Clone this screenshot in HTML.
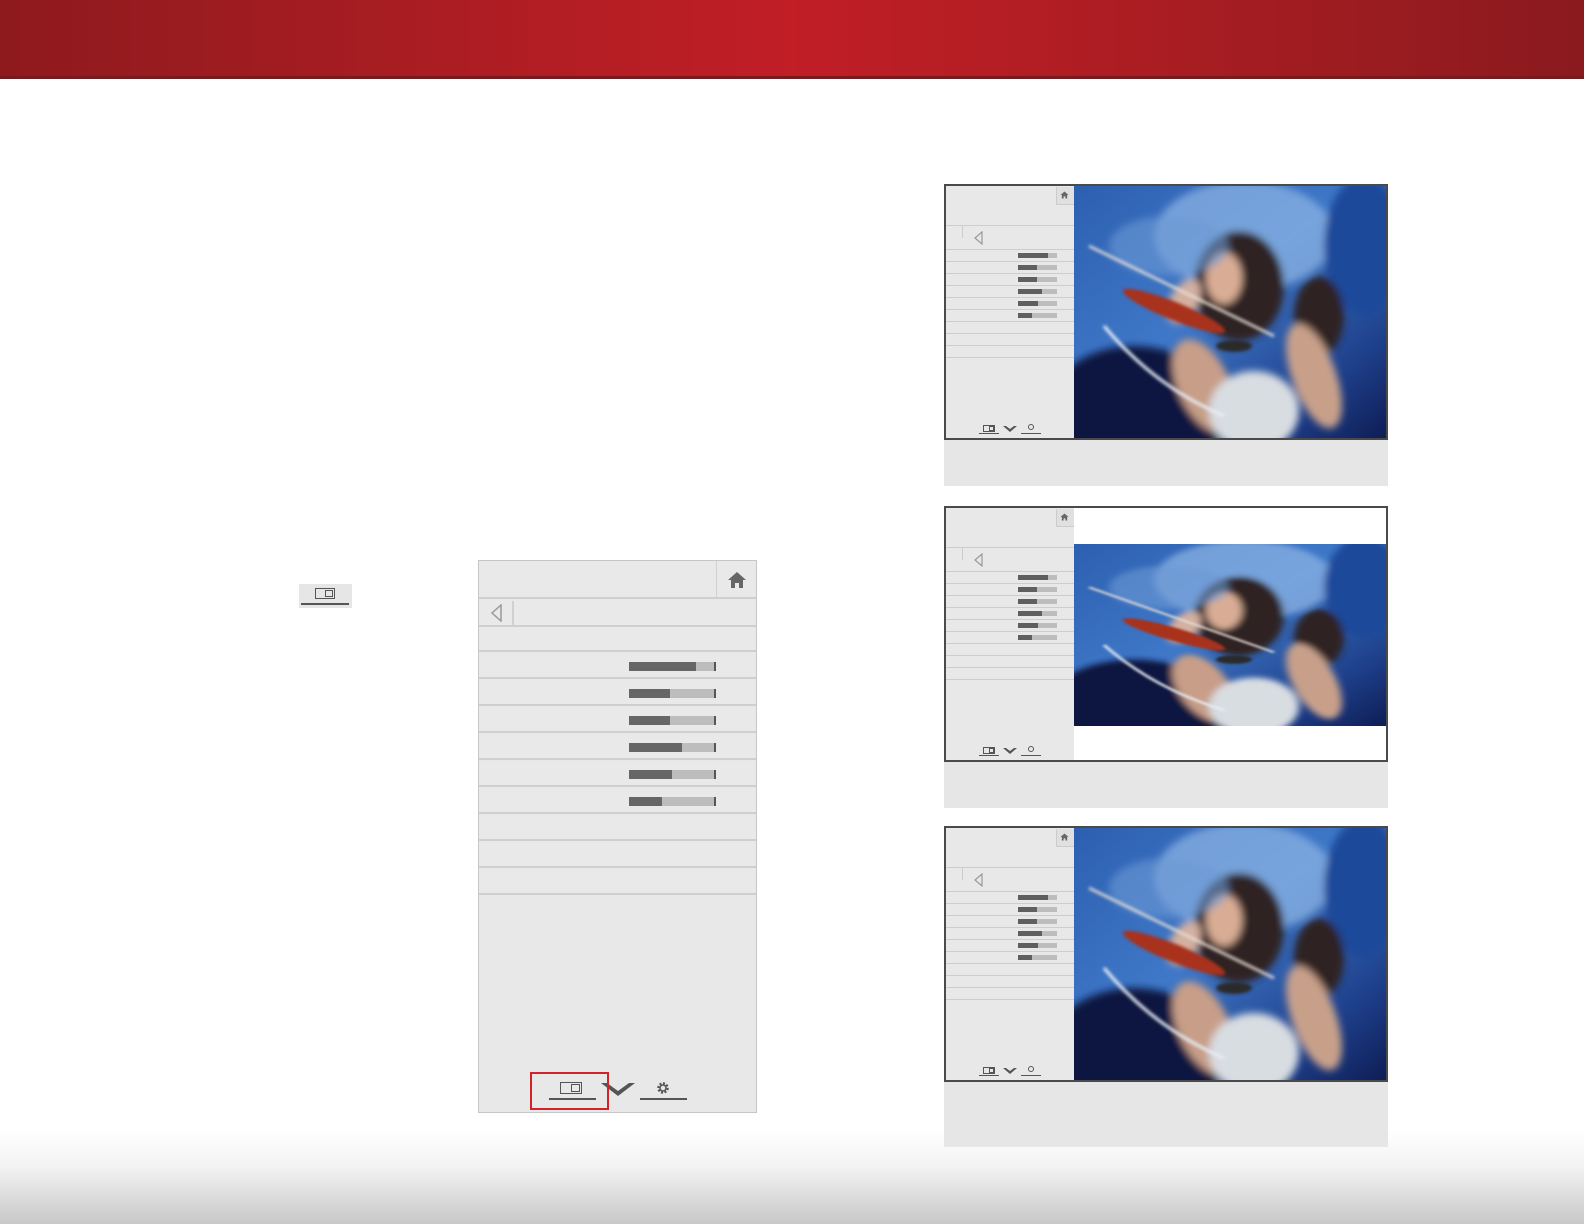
<!DOCTYPE html>
<html><head><meta charset="utf-8"><style>
*{margin:0;padding:0;box-sizing:border-box}
body{width:1584px;height:1224px;position:relative;overflow:hidden;background:#fff;font-family:"Liberation Sans",sans-serif}
.hdr{position:absolute;left:0;top:0;width:1584px;height:79px;background:linear-gradient(90deg,#8e1a1e 0%,#a81d22 25%,#c11e26 50%,#a81d22 75%,#8a1a1e 100%)}
.hdr:after{content:"";position:absolute;left:0;right:0;bottom:0;height:3px;background:linear-gradient(#7a1a1e,#6d1e22)}
.foot{position:absolute;left:0;top:1130px;width:1584px;height:94px;background:linear-gradient(#fff 0%,#f2f2f2 40%,#d6d6d6 80%,#c8c8c8 100%)}
.a{position:absolute}
.panel{left:478px;top:560px;width:279px;height:553px;background:#e8e8e8;border:1px solid #c6c6c6}
.row{position:absolute;left:0;width:277px;height:25px;border-bottom:2px solid #cfcfcf;background:#e9e9e9}
.bar{position:absolute;left:150px;top:8px;width:87px;height:9px;background:#bdbdbd;border-right:2px solid #555}
.bar i{display:block;height:9px;background:#666}
.thumb{position:absolute;left:944px;width:444px;height:256px;border:2px solid #4a4a4a;background:#fff;overflow:hidden}
.cap{position:absolute;left:944px;width:444px;background:#e6e6e6}
.mini{position:absolute;left:0;top:0;width:128px;height:252px;background:#e8e8e8}
.mrow{position:absolute;left:0;width:128px;height:12px;border-bottom:1px solid #cdcdcd}
.mbar{position:absolute;left:72px;top:3px;width:39px;height:5px;background:#bdbdbd}
.mbar i{display:block;height:5px;background:#5f5f5f}
.photo{position:absolute;overflow:hidden}
.photo svg{display:block;width:100%;height:100%}
</style></head><body>
<div class="hdr"></div>
<div class="foot"></div>

<svg width="0" height="0" style="position:absolute">
 <defs>
  <filter id="bl" x="-20%" y="-20%" width="140%" height="140%"><feGaussianBlur stdDeviation="4"/></filter>
  <filter id="bl2"><feGaussianBlur stdDeviation="1.5"/></filter>
  <linearGradient id="bg" x1="0" y1="0" x2="1" y2="1"><stop offset="0" stop-color="#2d5fb0"/><stop offset="0.45" stop-color="#3f78c8"/><stop offset="0.8" stop-color="#1e3f8a"/><stop offset="1" stop-color="#0e1d55"/></linearGradient>
  <g id="pic">
   <rect width="314" height="252" fill="url(#bg)"/>
   <g filter="url(#bl)">
    <ellipse cx="170" cy="50" rx="90" ry="55" fill="#8fb6e6" opacity="0.7"/>
    <ellipse cx="60" cy="230" rx="90" ry="70" fill="#0a1440"/>
    <ellipse cx="290" cy="60" rx="40" ry="70" fill="#1f4a9a"/>
    <ellipse cx="165" cy="100" rx="45" ry="55" fill="#2e2420"/>
    <ellipse cx="245" cy="130" rx="25" ry="40" fill="#2e2420"/>
    <ellipse cx="150" cy="92" rx="18" ry="26" fill="#d9ad95"/>
    <ellipse cx="130" cy="200" rx="26" ry="50" fill="#c89e88" transform="rotate(-25 130 200)"/>
    <ellipse cx="240" cy="190" rx="22" ry="55" fill="#c8a08a" transform="rotate(-20 240 190)"/>
    <ellipse cx="110" cy="115" rx="14" ry="24" fill="#d4b0a0" transform="rotate(30 110 115)"/>
    <ellipse cx="180" cy="225" rx="45" ry="40" fill="#d8dde2"/>
    <ellipse cx="95" cy="60" rx="60" ry="30" fill="#6d9ad6" opacity="0.6"/>
   </g>
   <g filter="url(#bl2)">
    <ellipse cx="100" cy="125" rx="55" ry="9" fill="#a8301c" transform="rotate(22 100 125)"/>
    <line x1="15" y1="60" x2="200" y2="150" stroke="#e8e0d8" stroke-width="2.5"/>
    <path d="M30 140 Q80 200 150 230" stroke="#e8eef5" stroke-width="3" fill="none"/>
    <ellipse cx="160" cy="160" rx="18" ry="6" fill="#2a2a2a"/>
   </g>
  </g>
 </defs>
</svg>

<!-- small icon -->
<div class="a" style="left:299px;top:584px;width:53px;height:24px;background:#e6e6e6"></div>
<div class="a" style="left:315px;top:588px;width:20px;height:11px;border:1px solid #555"></div>
<div class="a" style="left:325px;top:590px;width:8px;height:7px;border:1px solid #555"></div>
<div class="a" style="left:301px;top:603px;width:48px;height:2px;background:#555"></div>

<!-- main panel -->
<div class="a panel">
 <div class="row" style="top:0;height:38px;"></div>
 <div class="a" style="left:237px;top:0;width:1px;height:37px;background:#d0d0d0"></div>
 <svg class="a" style="left:248px;top:10px" width="20" height="18" viewBox="0 0 20 18"><path d="M10 1L1 9h3v8h4v-5h4v5h4V9h3z" fill="#666"/></svg>
 <div class="row" style="top:39px;height:27px"></div>
 <div class="a" style="left:33px;top:40px;width:2px;height:25px;background:#d0d0d0"></div>
 <svg class="a" style="left:11px;top:43px" width="14" height="18"><path d="M11 1L2 9l9 8z" fill="none" stroke="#999" stroke-width="1.5"/></svg>
 <div class="row" style="top:66px"></div>
 <div class="row" style="top:93px"><div class="bar"><i style="width:67px"></i></div></div>
 <div class="row" style="top:120px"><div class="bar"><i style="width:41px"></i></div></div>
 <div class="row" style="top:147px"><div class="bar"><i style="width:41px"></i></div></div>
 <div class="row" style="top:174px"><div class="bar"><i style="width:53px"></i></div></div>
 <div class="row" style="top:201px"><div class="bar"><i style="width:43px"></i></div></div>
 <div class="row" style="top:228px"><div class="bar"><i style="width:33px"></i></div></div>
 <div class="row" style="top:255px"></div>
 <div class="row" style="top:282px"></div>
 <div class="row" style="top:309px"></div>
 <div class="a" style="left:81px;top:521px;width:22px;height:12px;border:1px solid #555"></div>
 <div class="a" style="left:92px;top:523px;width:9px;height:8px;border:1px solid #555"></div>
 <div class="a" style="left:70px;top:537px;width:47px;height:2px;background:#555"></div>
 <svg class="a" style="left:121px;top:519px" width="36" height="20"><path d="M1 3l17 13L35 3l-6 0-11 8L7 3z" fill="#555"/></svg>
 <svg class="a" style="left:176px;top:519px" width="16" height="16" viewBox="0 0 16 16"><circle cx="8" cy="8" r="4.5" fill="none" stroke="#555" stroke-width="2.5" stroke-dasharray="2 1.5"/><circle cx="8" cy="8" r="3" fill="none" stroke="#555" stroke-width="1.5"/></svg>
 <div class="a" style="left:161px;top:537px;width:47px;height:2px;background:#555"></div>
 <div class="a" style="left:51px;top:511px;width:79px;height:38px;border:2px solid #d2232a"></div>
</div>

<!-- thumbnails -->
<div class="thumb" style="top:184px"><div class="photo" style="left:128px;top:0;width:314px;height:252px"><svg viewBox="0 0 314 252" preserveAspectRatio="none"><use href="#pic"/></svg></div><div class="mini"></div></div>
<div class="cap" style="top:440px;height:46px"></div>
<div class="thumb" style="top:506px"><div class="photo" style="left:128px;top:36px;width:314px;height:182px"><svg viewBox="0 0 314 252" preserveAspectRatio="none"><use href="#pic"/></svg></div><div class="mini"></div></div>
<div class="cap" style="top:762px;height:46px"></div>
<div class="thumb" style="top:826px"><div class="photo" style="left:128px;top:0;width:314px;height:252px"><svg viewBox="0 0 314 252" preserveAspectRatio="none"><use href="#pic"/></svg></div><div class="mini"></div></div>
<div class="cap" style="top:1082px;height:65px"></div>

<script>
document.querySelectorAll('.mini').forEach(function(m){
 var h='';
 h+='<div class="mrow" style="top:0;height:40px"></div>';
 h+='<div class="a" style="left:110px;top:1px;width:18px;height:18px;background:#e0e0e0;border-left:1px solid #ccc;border-bottom:1px solid #ccc"></div>';
 h+='<svg class="a" style="left:114px;top:5px" width="9" height="8" viewBox="0 0 20 18"><path d="M10 1L1 9h3v8h4v-5h4v5h4V9h3z" fill="#666"/></svg>';
 h+='<div class="mrow" style="top:40px;height:24px"></div>';
 h+='<div class="a" style="left:16px;top:40px;width:1px;height:12px;background:#ccc"></div>';
 h+='<svg class="a" style="left:28px;top:45px" width="10" height="14"><path d="M8 1L1 7l7 6z" fill="none" stroke="#999" stroke-width="1.2"/></svg>';
 var w=[30,19,19,24,20,14];
 for(var i=0;i<9;i++){h+='<div class="mrow" style="top:'+(64+i*12)+'px">'+(i<6?'<div class="mbar"><i style="width:'+w[i]+'px"></i></div>':'')+'</div>';}
 h+='<div class="a" style="left:37px;top:239px;width:12px;height:7px;border:1px solid #555"></div>';
 h+='<div class="a" style="left:43px;top:240px;width:5px;height:5px;border:1px solid #555"></div>';
 h+='<div class="a" style="left:33px;top:247px;width:20px;height:1px;background:#555"></div>';
 h+='<svg class="a" style="left:56px;top:239px" width="16" height="9"><path d="M1 1l7 6 7-6h-3l-4 3-4-3z" fill="#555"/></svg>';
 h+='<div class="a" style="left:82px;top:238px;width:6px;height:6px;border:1.5px solid #555;border-radius:50%"></div>';
 h+='<div class="a" style="left:75px;top:247px;width:20px;height:1px;background:#555"></div>';
 m.innerHTML=h;
});
</script>
</body></html>
